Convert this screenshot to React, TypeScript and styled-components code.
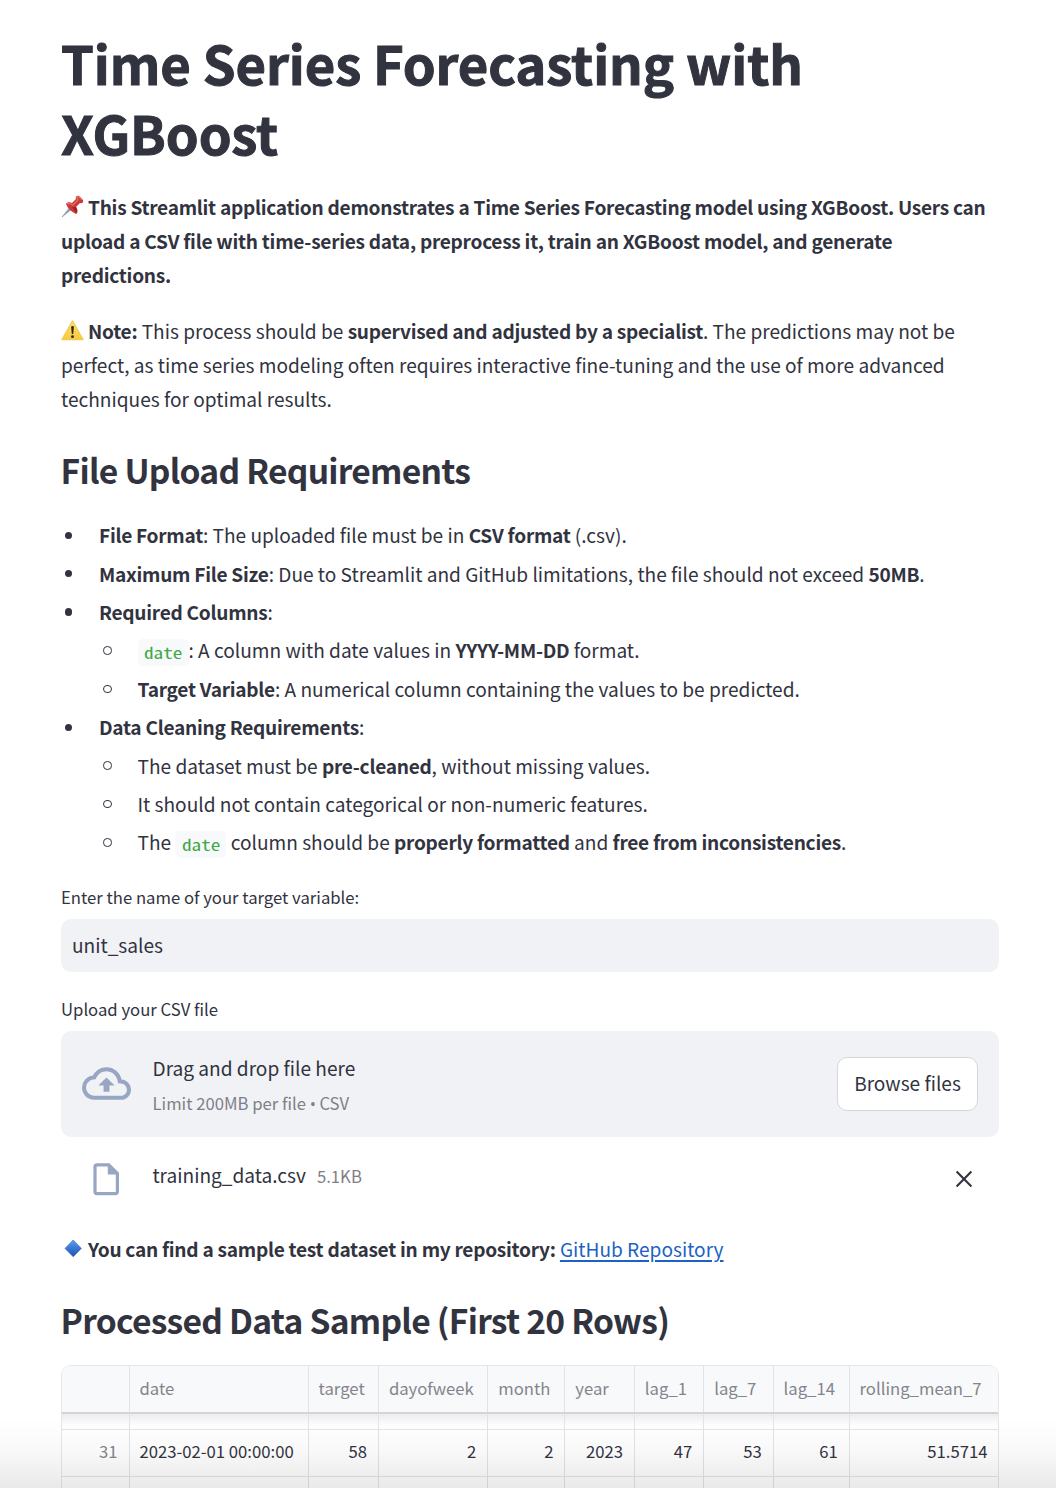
import React from "react";
import styled, { createGlobalStyle } from "styled-components";

const GlobalStyle = createGlobalStyle`
  *, *::before, *::after { box-sizing: border-box; }
  html, body { margin: 0; padding: 0; background: #fff; }
  body { height: 1488px; overflow: hidden; }
`;

const Page = styled.main`
  position: relative;
  width: 1056px;
  height: 1488px;
  overflow: hidden;
  padding: 27px 57px 0 61px;
  background: #fff;
  color: #31333f;
  font-family: "Noto Sans CJK SC", "Source Sans Pro", "Noto Sans", sans-serif;
  font-size: 19.1px;
  line-height: 34px;
`;

const Title = styled.h1`
  margin: 0 0 22px;
  font-size: 52.6px;
  line-height: 70.4px;
  font-weight: 700;
  letter-spacing: -0.07px;
  -webkit-text-stroke: 1px #31333f;
`;

const Heading = styled.h2<{ $gap: number }>`
  margin: ${(p) => p.$gap}px 0 0 -0.5px;
  height: 45px;
  font-size: 33.6px;
  line-height: 45px;
  font-weight: 600;
  letter-spacing: -0.73px;
  white-space: nowrap;
`;

const Paragraph = styled.p<{ $gap?: number }>`
  margin: ${(p) => p.$gap ?? 0}px 0 0;
`;

const Line = styled.span`
  display: block;
  height: 34px;
  white-space: nowrap;
`;

const Strong = styled.strong`
  font-weight: 600;
  letter-spacing: -0.265px;
`;

const Emoji = styled.svg`
  width: 23px;
  height: 23px;
  margin-right: 4px;
  vertical-align: -3px;
`;

const List = styled.ul<{ $gap?: number }>`
  list-style: none;
  margin: ${(p) => p.$gap ?? 0}px 0 0;
  padding: 0;
`;

const Item = styled.li<{ $nested?: boolean }>`
  display: flex;
  align-items: center;
  height: 38.4px;
  padding-left: ${(p) => (p.$nested ? 42 : 3.7)}px;
  white-space: nowrap;
`;

const Marker = styled.span<{ $hollow?: boolean }>`
  flex: none;
  width: ${(p) => (p.$hollow ? 8.5 : 7.5)}px;
  height: ${(p) => (p.$hollow ? 8.5 : 7.5)}px;
  margin-right: ${(p) => (p.$hollow ? 26 : 26.8)}px;
  border-radius: 50%;
  border: ${(p) => (p.$hollow ? "1.2px solid #31333f" : "none")};
  background: ${(p) => (p.$hollow ? "transparent" : "#31333f")};
`;

const CodePill = styled.code`
  display: inline-block;
  width: 51px;
  height: 27px;
  padding: 0 6.5px;
  border-radius: 5px;
  background: #f8f9fb;
  color: #3fa845;
  font-family: "Noto Sans Mono CJK SC", "Liberation Mono", monospace;
  font-size: 15.6px;
  line-height: 26px;
  vertical-align: -0.5px;
`;

const WideMono = styled.span`
  display: inline-block;
  transform: scaleX(1.23);
  transform-origin: left;
`;

const Label = styled.label<{ $gap: number }>`
  display: block;
  margin-top: ${(p) => p.$gap}px;
  height: 26px;
  font-size: 16.7px;
  line-height: 26px;
`;

const TextField = styled.div`
  display: flex;
  align-items: center;
  height: 53px;
  margin-top: 8.6px;
  padding: 0 11px;
  border-radius: 10px;
  background: #f0f2f6;
`;

const Dropzone = styled.section`
  display: flex;
  align-items: center;
  height: 106px;
  margin-top: 9px;
  padding: 0 21px;
  border-radius: 10px;
  background: #f0f2f6;
`;

const Glyph = styled.svg<{ $size: number; $lift?: number }>`
  flex: none;
  width: ${(p) => p.$size}px;
  height: ${(p) => p.$size}px;
  margin-bottom: ${(p) => p.$lift ?? 0}px;
  fill: #97a6c3;
`;

const DropText = styled.div`
  flex: 1;
  margin: 4px 0 0 21.5px;
`;

const Small = styled.span`
  display: block;
  margin-top: 1px;
  color: #7f8087;
  font-size: 16.7px;
`;

const Bullet = styled.span`
  font-family: "Open Sans", "Noto Sans", sans-serif;
  letter-spacing: -0.4px;
`;

const Browse = styled.button`
  width: 141px;
  height: 54px;
  padding: 0 0 2px;
  border: 1px solid #d6d7d9;
  border-radius: 10px;
  background: #fff;
  color: inherit;
  font: inherit;
`;

const FileRow = styled.div`
  display: flex;
  align-items: center;
  height: 42px;
  margin-top: 21px;
  padding: 0 24px 0 26px;
`;

const FileName = styled.span`
  margin: -9px 11px 0 27px;
`;

const FileSize = styled.span`
  flex: 1;
  margin-top: -6px;
  color: #7f8087;
  font-size: 16.7px;
`;

const Link = styled.a`
  color: #1c62c4;
  text-decoration: underline;
  text-underline-offset: 3px;
  text-decoration-thickness: 1.6px;
`;

const COLUMNS = "67.5px 179.2px 70.3px 109.4px 77.1px 69.5px 69.3px 69.4px 76px 1fr";

const Table = styled.div`
  height: 140px;
  margin-top: 23px;
  overflow: hidden;
  border: 1px solid #e6e7ea;
  border-radius: 10px 10px 0 0;
  font-size: 16.7px;
`;

const Row = styled.div<{ $height: number; $header?: boolean }>`
  display: grid;
  grid-template-columns: ${COLUMNS};
  height: ${(p) => p.$height}px;
  border-bottom: ${(p) => (p.$header ? "2px solid #d3d4d7" : "1px solid #e4e5e7")};
  background: ${(p) => (p.$header ? "#f8f9fb" : "transparent")};
`;

const ShadowRow = styled(Row)`
  background: linear-gradient(#ececee, #fff 12px);
`;

const Cell = styled.div<{ $start?: boolean; $muted?: boolean; $drop?: number }>`
  display: flex;
  align-items: center;
  justify-content: ${(p) => (p.$start ? "flex-start" : "flex-end")};
  padding: 0 11px ${(p) => p.$drop ?? 2.5}px 9.9px;
  border-right: 1px solid #e2e3e6;
  color: ${(p) => (p.$muted ? "#84858c" : "#31333f")};
  white-space: nowrap;
  &:last-child { border-right: 0; padding-right: 10.5px; }
`;

const BottomShade = styled.div`
  position: absolute;
  inset: auto 0 0 0;
  height: 70px;
  pointer-events: none;
  background: linear-gradient(rgba(0, 0, 0, 0), rgba(0, 0, 0, 0.022) 45%, rgba(0, 0, 0, 0.085));
`;

const Code = ({ children }: { children: React.ReactNode }) => (
  <CodePill><WideMono>{children}</WideMono></CodePill>
);

const Pushpin = () => (
  <Emoji viewBox="0 0 23 23">
    <path d="M1 22 L9 12 L11 14 Z" fill="#8d9fac" stroke="#8d9fac" strokeWidth=".7" />
    <path d="M5 9 C6 7 9 7 11 8 L15 4 C14 2 16 0 18 1 L22 5 C23 7 21 9 19 8 L15 12 C17 15 17 18 15 19 C11 17 7 14 5 9Z" fill="#c93a3a" />
    <path d="M6 9 C8 8 10 9 12 10 L17 5 L16 3 C17 1 19 2 21 5" fill="none" stroke="#e8706a" strokeWidth="1.2" />
    <path d="M11 12 L15 12 C17 15 16 17 15 18 Z" fill="#a91f27" />
  </Emoji>
);

const Warning = () => (
  <Emoji viewBox="0 0 23 23">
    <defs>
      <linearGradient id="warn" x1="0" y1="0" x2="0" y2="1">
        <stop offset="0" stopColor="#ffe56b" />
        <stop offset="1" stopColor="#f9c93c" />
      </linearGradient>
    </defs>
    <path d="M11.5 2 L22 20.5 H1Z" fill="url(#warn)" stroke="#f3cb50" strokeWidth="1.4" strokeLinejoin="round" />
    <path d="M10.1 7.5 Q11.5 6.4 12.9 7.5 L12.2 15 H10.8Z" fill="#292721" />
    <circle cx="11.5" cy="17.7" r="1.4" fill="#292721" />
  </Emoji>
);

const Diamond = () => (
  <Emoji viewBox="0 0 23 23">
    <defs>
      <linearGradient id="gem" x1="0" y1="0" x2="0" y2="1">
        <stop offset="0" stopColor="#5ba3ee" />
        <stop offset=".45" stopColor="#3a7bd8" />
        <stop offset="1" stopColor="#1f50ad" />
      </linearGradient>
    </defs>
    <path d="M12.2 3 L20.4 11.4 L12.2 19.8 L4 11.4Z" fill="url(#gem)" stroke="#2f68c2" strokeWidth=".6" />
  </Emoji>
);

const headers = ["", "date", "target", "dayofweek", "month", "year", "lag_1", "lag_7", "lag_14", "rolling_mean_7"];
const values = ["31", "2023-02-01 00:00:00", "58", "2", "2", "2023", "47", "53", "61", "51.5714"];

export default function App() {
  return (
    <>
      <GlobalStyle />
      <Page>
        <Title>Time Series Forecasting with<br />XGBoost</Title>
        <Paragraph>
          <Strong>
            <Line><Pushpin />This Streamlit application demonstrates a Time Series Forecasting model using XGBoost. Users can</Line>
            <Line>upload a CSV file with time-series data, preprocess it, train an XGBoost model, and generate</Line>
            <Line>predictions.</Line>
          </Strong>
        </Paragraph>
        <Paragraph $gap={22}>
          <Line><Warning /><Strong>Note:</Strong> This process should be <Strong>supervised and adjusted by a specialist</Strong>. The predictions may not be</Line>
          <Line>perfect, as time series modeling often requires interactive fine-tuning and the use of more advanced</Line>
          <Line>techniques for optimal results.</Line>
        </Paragraph>

        <Heading $gap={31}>File Upload Requirements</Heading>
        <List $gap={24.3}>
          <Item><Marker /><span><Strong>File Format</Strong>: The uploaded file must be in <Strong>CSV format</Strong> (.csv).</span></Item>
          <Item><Marker /><span><Strong>Maximum File Size</Strong>: Due to Streamlit and GitHub limitations, the file should not exceed <Strong>50MB</Strong>.</span></Item>
          <Item><Marker /><span><Strong>Required Columns</Strong>:</span></Item>
          <Item $nested><Marker $hollow /><span><Code>date</Code>: A column with date values in <Strong>YYYY-MM-DD</Strong> format.</span></Item>
          <Item $nested><Marker $hollow /><span><Strong>Target Variable</Strong>: A numerical column containing the values to be predicted.</span></Item>
          <Item><Marker /><span><Strong>Data Cleaning Requirements</Strong>:</span></Item>
          <Item $nested><Marker $hollow /><span>The dataset must be <Strong>pre-cleaned</Strong>, without missing values.</span></Item>
          <Item $nested><Marker $hollow /><span>It should not contain categorical or non-numeric features.</span></Item>
          <Item $nested><Marker $hollow /><span>The <Code>date</Code> column should be <Strong>properly formatted</Strong> and <Strong>free from inconsistencies</Strong>.</span></Item>
        </List>

        <Label $gap={22.7}>Enter the name of your target variable:</Label>
        <TextField>unit_sales</TextField>
        <Label $gap={24.4}>Upload your CSV file</Label>
        <Dropzone>
          <Glyph $size={49} $lift={2} viewBox="0 0 24 24">
            <path d="M19.35 10.04A7.49 7.49 0 0 0 12 4C9.11 4 6.6 5.64 5.35 8.04A5.994 5.994 0 0 0 0 14c0 3.31 2.69 6 6 6h13c2.76 0 5-2.24 5-5 0-2.64-2.05-4.78-4.65-4.96zM19 18H6c-2.21 0-4-1.79-4-4 0-2.05 1.53-3.76 3.56-3.97l1.07-.11.5-.95A5.469 5.469 0 0 1 12 6c2.62 0 4.88 1.86 5.39 4.43l.3 1.5 1.53.11A2.98 2.98 0 0 1 22 15c0 1.65-1.35 3-3 3zM8 13h2.55v3h2.9v-3H16l-4-4z" />
          </Glyph>
          <DropText>
            Drag and drop file here
            <Small>Limit 200MB per file <Bullet>•</Bullet> CSV</Small>
          </DropText>
          <Browse>Browse files</Browse>
        </Dropzone>
        <FileRow>
          <Glyph $size={38.4} viewBox="0 0 24 24">
            <path d="M14 2H6c-1.1 0-1.99.9-1.99 2L4 20c0 1.1.89 2 1.99 2H18c1.1 0 2-.9 2-2V8l-6-6zM6 20V4h7v5h5v11H6z" />
          </Glyph>
          <FileName>training_data.csv</FileName>
          <FileSize>5.1KB</FileSize>
          <svg width="22" height="22" viewBox="0 0 22 22" stroke="#31333f" strokeWidth="2.1">
            <path d="M3.6 3.6 18.4 18.4M18.4 3.6 3.6 18.4" />
          </svg>
        </FileRow>
        <Paragraph $gap={32}>
          <Line><Diamond /><Strong>You can find a sample test dataset in my repository:</Strong> <Link>GitHub Repository</Link></Line>
        </Paragraph>

        <Heading $gap={31}>Processed Data Sample (First 20 Rows)</Heading>
        <Table>
          <Row $height={48} $header>
            {headers.map((h, i) => <Cell key={i} $start $muted>{h}</Cell>)}
          </Row>
          <ShadowRow $height={16}>
            {headers.map((_, i) => <Cell key={i} />)}
          </ShadowRow>
          <Row $height={47}>
            {values.map((v, i) => <Cell key={i} $muted={i === 0} $start={i === 1} $drop={4.5}>{v}</Cell>)}
          </Row>
          <Row $height={47}>
            {headers.map((_, i) => <Cell key={i} />)}
          </Row>
        </Table>
        <BottomShade />
      </Page>
    </>
  );
}
